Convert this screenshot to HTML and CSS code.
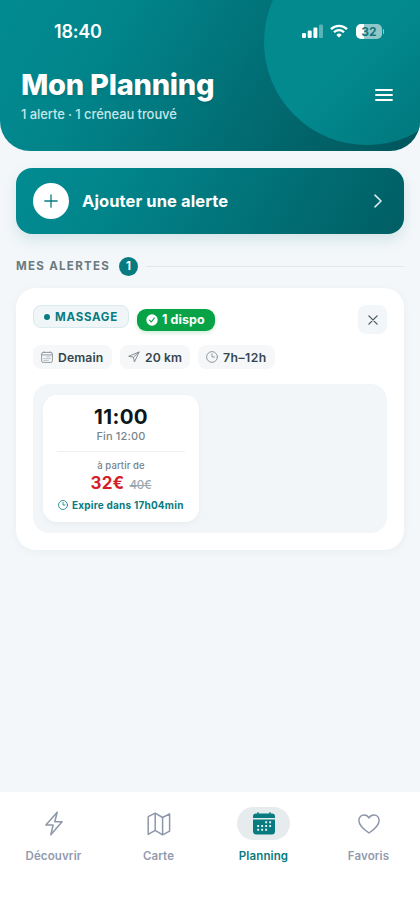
FILE: index.html
```html
<!DOCTYPE html>
<html lang="fr">
<head>
<meta charset="utf-8">
<meta name="viewport" content="width=device-width, initial-scale=1">
<title>Mon Planning</title>
<link rel="stylesheet" href="styles.css">
</head>
<body>
<div class="app">
  <header class="header">
    <div class="status">
      <span class="time">18:40</span>
      <div class="status-icons">
        <svg class="signal" width="21" height="14" viewBox="0 0 21 14" fill="#fff"><rect x="0" y="9" width="4" height="5" rx="1.2"/><rect x="5.7" y="6.6" width="4" height="7.4" rx="1.2"/><rect x="11.4" y="3.6" width="4" height="10.4" rx="1.2"/><rect x="17" y="0.5" width="4" height="13.5" rx="1.2" opacity=".35"/></svg>
        <svg class="wifi" width="18" height="14" viewBox="0 0 18 14" fill="none" stroke="#fff" stroke-width="2.3"><path d="M1 5.1a11.3 11.3 0 0 1 16 0"/><path d="M4 8.3a7 7 0 0 1 10 0"/><path d="M9 13.6 6.3 10.9a3.9 3.9 0 0 1 5.4 0Z" fill="#fff" stroke="none"/></svg>
        <span class="battery">32</span>
      </div>
    </div>
    <div class="heading">
      <div>
        <h1>Mon Planning</h1>
        <p>1 alerte · 1 créneau trouvé</p>
      </div>
      <svg class="menu" width="18" height="14" viewBox="0 0 18 14" stroke="#fff" stroke-width="1.9" stroke-linecap="round"><path d="M1 2h16M1 7h16M1 12h16"/></svg>
    </div>
  </header>

  <main>
    <div class="cta">
      <span class="plus"><svg width="14" height="14" viewBox="0 0 14 14" stroke="#087b80" stroke-width="1.3" stroke-linecap="round"><path d="M7 .8v12.4M.8 7h12.4"/></svg></span>
      <span class="cta-label">Ajouter une alerte</span>
      <svg width="8" height="14" viewBox="0 0 8 14" fill="none" stroke="#d9eeef" stroke-width="1.6" stroke-linecap="round" stroke-linejoin="round"><path d="m1 1.2 6 5.8-6 5.8"/></svg>
    </div>

    <div class="section">
      <h2>MES ALERTES</h2>
      <span class="count">1</span>
      <span class="rule"></span>
    </div>

    <section class="card">
      <div class="card-top">
        <span class="category"><i></i>MASSAGE</span>
        <span class="available"><svg width="12" height="12" viewBox="0 0 12 12"><circle cx="6" cy="6" r="5.7" fill="#fff"/><path d="m3.6 6.2 1.7 1.8 3-3.9" fill="none" stroke="#08a347" stroke-width="1.1" stroke-linecap="round" stroke-linejoin="round"/></svg>1 dispo</span>
        <span class="close"><svg width="10" height="10" viewBox="0 0 10 10" stroke="#4b5a63" stroke-width="1.3" stroke-linecap="round"><path d="m.9.9 8.2 8.2M9.1.9.9 9.1"/></svg></span>
      </div>
      <div class="chips">
        <span class="chip day"><svg width="12" height="12" viewBox="0 0 12 12" fill="none" stroke="#7b858c" stroke-width=".8"><rect x=".6" y="1.4" width="10.8" height="10" rx="1.6"/><path d="M.6 3.9h10.8M3 .4v1.4M9 .4v1.4"/><path d="M5.5 5.8h4M2.6 7.6h6.9M2.6 9.4h5" stroke-dasharray="1 .9"/></svg>Demain</span>
        <span class="chip dist"><svg width="12" height="12" viewBox="0 0 12 12" fill="none" stroke="#7b858c" stroke-width=".9" stroke-linejoin="round"><path d="M11.2.9.7 5.3l4.7.9 1 4.8Z M11.2.9 5.4 6.2"/></svg>20 km</span>
        <span class="chip hours"><svg width="12" height="12" viewBox="0 0 12 12" fill="none" stroke="#7b858c" stroke-width=".8" stroke-linecap="round"><circle cx="6" cy="6" r="5.4"/><path d="M6 2.8V6h2.6"/></svg>7h–12h</span>
      </div>
      <div class="slots">
        <article class="slot">
          <div class="start">11:00</div>
          <div class="end">Fin 12:00</div>
          <div class="divider"></div>
          <div class="from">à partir de</div>
          <div class="price"><strong>32€</strong><s>40€</s></div>
          <div class="expiry"><svg width="10" height="10" viewBox="0 0 10 10" fill="none" stroke="#087b80" stroke-width=".8" stroke-linecap="round"><circle cx="5" cy="5" r="4.5"/><path d="M5 2.3V5h2.1"/></svg>Expire dans 17h04min</div>
        </article>
      </div>
    </section>
  </main>

  <nav class="tabs">
    <div class="tab"><span class="tab-icon"><svg width="18" height="25" viewBox="0 0 18 25" fill="none" stroke="#8e96a9" stroke-width="1.5" stroke-linejoin="round"><path d="M12.2 1.2.9 14h7.2L5.8 23.8 17.1 10.7H9.8Z"/></svg></span>Découvrir</div>
    <div class="tab"><span class="tab-icon"><svg width="24" height="24" viewBox="0 0 24 24" fill="none" stroke="#8e96a9" stroke-width="1.5" stroke-linejoin="round"><path d="m1.2 4.7 7-3.5 7.4 4.3 7-3.7v17.4l-7 3.6-7.4-4.4-7 4Z M8.2 1.2v18.2 M15.6 5.5v17.3"/></svg></span>Carte</div>
    <div class="tab active"><span class="tab-icon"><svg width="22" height="23" viewBox="0 0 22 23"><path d="M5 .7v3M17 .7v3" stroke="#087b80" stroke-width="1.4" stroke-linecap="round"/><path d="M0 6V4.6A3 3 0 0 1 3 1.6h16a3 3 0 0 1 3 3V6Z M0 7.5h22v11.7a3.2 3.2 0 0 1-3.2 3.2H3.2A3.2 3.2 0 0 1 0 19.2Z" fill="#087b80"/><path d="M12.2 10.2h1.9M16.2 10.2h1.9M4.2 14h1.9M8.2 14h1.9M12.2 14h1.9M16.2 14h1.9M4.2 17.8h1.9M8.2 17.8h1.9M12.2 17.8h1.9" stroke="#e7eeef" stroke-width="1.9"/></svg></span>Planning</div>
    <div class="tab"><span class="tab-icon"><svg width="22" height="20" viewBox="0 0 22 20" fill="none" stroke="#8e96a9" stroke-width="1.5" stroke-linejoin="round"><path d="M11 19C7 16.3.9 12 .9 6.5.9 3.2 3.2 1 6 1c2.3 0 4.1 1.2 5 3 .9-1.8 2.7-3 5-3 2.8 0 5.1 2.2 5.1 5.5C21.1 12 15 16.3 11 19Z"/></svg></span>Favoris</div>
  </nav>
</div>
</body>
</html>
```
FILE: styles.css
```css
* { box-sizing: border-box; }
body {
  margin: 0;
  background: #f3f7f9;
  font-family: Inter, "Liberation Sans", sans-serif;
  color: #0b1719;
}
svg { display: block; flex: none; }
.app {
  width: 420px;
  height: 908px;
  display: flex;
  flex-direction: column;
  overflow: hidden;
}
.header {
  position: relative;
  height: 151px;
  flex: none;
  overflow: hidden;
  border-radius: 0 0 30px 30px;
  background: linear-gradient(120deg, #018b91 0%, #01858b 25%, #01757b 50%, #01646a 75%, #00555b 100%);
  color: #fff;
}
.header::before {
  content: "";
  position: absolute;
  left: 264px;
  top: -61px;
  width: 206px;
  height: 206px;
  border-radius: 50%;
  background: linear-gradient(135deg, #028a8f 30%, #028a8f 50%, #017b80 80%);
}
.status {
  position: relative;
  display: flex;
  justify-content: space-between;
  height: 62px;
  padding: 0 36px 0 54px;
  align-items: center;
}
.time { font-size: 18px; font-weight: 600; letter-spacing: -.2px; }
.status-icons { display: flex; align-items: center; }
.wifi { margin: 0 8px 0 7px; }
.battery {
  position: relative;
  width: 26px;
  height: 15px;
  border-radius: 5px;
  background: linear-gradient(90deg, #fff 32%, #92c7ca 32%);
  color: #16777c;
  font-size: 12px;
  line-height: 15px;
  font-weight: 700;
  text-align: center;
  margin-right: 2px;
}
.battery::after {
  content: "";
  position: absolute;
  right: -2px;
  top: 5px;
  width: 1.5px;
  height: 5px;
  border-radius: 0 2px 2px 0;
  background: #92c7ca;
}
.heading {
  position: relative;
  display: flex;
  justify-content: space-between;
  padding: 5px 27px 0 21px;
}
h1 {
  margin: 0;
  font-size: 29px;
  line-height: 36px;
  font-weight: 800;
  letter-spacing: -.25px;
  text-shadow: 0 2px 3px rgba(0, 50, 55, .16);
}
.heading p {
  margin: 2px 0 0;
  font-size: 13px;
  line-height: 19px;
  font-weight: 500;
  letter-spacing: -.08px;
  color: #c4e6e8;
}
.menu { margin-top: 21px; }
main { flex: 1; padding: 17px 16px 0; }
.cta {
  display: flex;
  align-items: center;
  height: 66px;
  padding: 0 22px 0 17px;
  border-radius: 16px;
  background: linear-gradient(120deg, #018c92 0%, #01858b 25%, #01757b 55%, #005e64 100%);
  box-shadow: 0 6px 14px rgba(0, 112, 120, .13);
  color: #fff;
}
.plus {
  width: 36px;
  height: 36px;
  border-radius: 50%;
  background: #fff;
  display: grid;
  place-items: center;
}
.cta-label {
  flex: 1;
  margin-left: 13px;
  font-size: 16.5px;
  font-weight: 700;
  letter-spacing: .1px;
}
.section { display: flex; align-items: center; height: 20px; margin-top: 22px; }
h2 {
  margin: 0;
  font-size: 11.5px;
  font-weight: 700;
  letter-spacing: 1.3px;
  color: #6b7a7f;
}
.count {
  width: 19px;
  height: 19px;
  margin: 0 8px 0 9px;
  border-radius: 50%;
  background: #087b80;
  color: #fff;
  font-size: 11.5px;
  font-weight: 700;
  line-height: 19px;
  text-align: center;
}
.rule { flex: 1; height: 1px; background: #e2e8ea; }
.card {
  height: 262px;
  margin-top: 12px;
  padding: 17px;
  border-radius: 20px;
  background: #fff;
  box-shadow: 0 2px 10px rgba(20, 55, 65, .045);
}
.card-top { display: flex; align-items: flex-start; height: 40px; }
.category {
  display: flex;
  align-items: center;
  width: 96px;
  height: 23px;
  padding-left: 10px;
  border: 1px solid #d7eaed;
  border-radius: 8px;
  background: #f0f6f8;
  color: #087b80;
  font-size: 11.5px;
  font-weight: 700;
  letter-spacing: .75px;
}
.category i { width: 6px; height: 6px; margin-right: 5px; border-radius: 50%; background: #087b80; }
.available {
  display: flex;
  align-items: center;
  gap: 4.5px;
  width: 78px;
  height: 22px;
  margin: 3.5px 0 0 7.5px;
  padding-left: 9px;
  border-radius: 9px;
  background: #08a347;
  box-shadow: 0 2px 4px rgba(8, 163, 71, .2);
  color: #fff;
  font-size: 12.5px;
  font-weight: 700;
  letter-spacing: .1px;
}
.close {
  display: grid;
  place-items: center;
  width: 29px;
  height: 29px;
  margin-left: auto;
  border-radius: 8px;
  background: #f3f6f9;
}
.chips { display: flex; gap: 8px; height: 24px; }
.chip {
  display: flex;
  align-items: center;
  gap: 5px;
  padding-left: 8px;
  border-radius: 8px;
  background: #f5f7f9;
  color: #34454d;
  font-size: 12.2px;
  font-weight: 600;
  letter-spacing: .1px;
}
.day { width: 79px; }
.dist { width: 70px; }
.hours { width: 77px; letter-spacing: .5px; }
.slots {
  height: 149px;
  margin-top: 15px;
  padding: 11px 10px;
  border-radius: 16px;
  background: #f3f6f9;
}
.slot {
  width: 156px;
  height: 127px;
  padding: 10px 14px 0;
  border-radius: 14px;
  background: #fff;
  box-shadow: 0 2px 5px rgba(20, 50, 65, .05);
  text-align: center;
}
.start { font-size: 20.5px; line-height: 24px; font-weight: 700; letter-spacing: .4px; }
.end { font-size: 11px; line-height: 14px; color: #77858c; font-weight: 500; letter-spacing: .15px; }
.divider { height: 1px; margin: 8px 0; background: #edf0f2; }
.from { font-size: 9.5px; line-height: 12px; color: #74828a; font-weight: 500; letter-spacing: .1px; }
.price { display: flex; justify-content: center; align-items: baseline; gap: 5px; height: 22px; line-height: 22px; }
.price strong { color: #d31f2b; font-size: 17px; font-weight: 700; letter-spacing: .2px; }
.price s { color: #9ba5ae; font-size: 11.5px; font-weight: 500; letter-spacing: -.2px; }
.expiry {
  display: flex;
  align-items: center;
  justify-content: center;
  gap: 3.5px;
  height: 14px;
  margin-top: 4px;
  color: #087b80;
  font-size: 10px;
  font-weight: 700;
  letter-spacing: .22px;
  white-space: nowrap;
}
.tabs {
  display: grid;
  grid-template-columns: repeat(4, 105px);
  height: 116px;
  flex: none;
  padding: 15px 0 0 1px;
  background: #fff;
}
.tab {
  display: flex;
  flex-direction: column;
  align-items: center;
  color: #929aae;
  font-size: 11.5px;
  line-height: 16px;
  font-weight: 600;
  letter-spacing: .13px;
}
.tab-icon {
  display: grid;
  place-items: center;
  width: 53px;
  height: 33px;
  margin-bottom: 8px;
  border-radius: 17px;
}
.active { color: #087b80; }
.active .tab-icon { background: #e6ebee; }
```
